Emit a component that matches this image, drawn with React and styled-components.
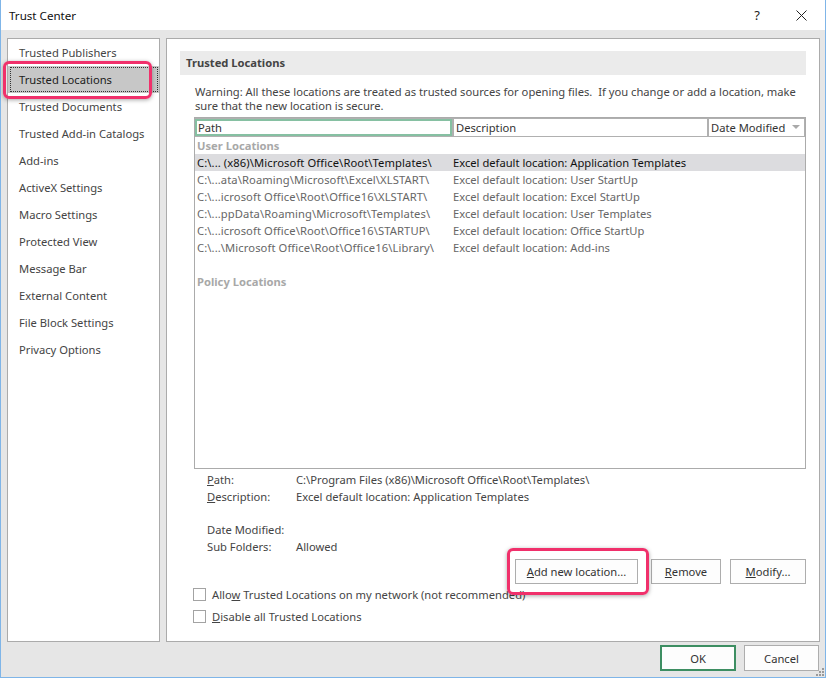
import React from "react";
import styled, { createGlobalStyle } from "styled-components";

const Global = createGlobalStyle`
  html, body { margin: 0; padding: 0; background: #ffffff; }
  body {
    font-family: "Noto Sans", "Segoe UI", sans-serif;
    font-size: 11.2px;
    color: #444444;
  }
  * { box-sizing: border-box; }
`;

const Window = styled.div`
  position: relative;
  width: 826px;
  height: 678px;
  display: flex;
  flex-direction: column;
  background: #e6e6e6;
  border-left: 1px solid #7fb5e8;
  border-right: 1px solid #7fb5e8;
  border-bottom: 1px solid #7fb5e8;
`;

const TitleBar = styled.div`
  height: 30px;
  flex: 0 0 30px;
  display: flex;
  align-items: center;
  background: #ffffff;
  padding-left: 8px;
`;

const Title = styled.div`
  flex: 1;
  color: #111;
  font-size: 11.6px;
`;

const TitleButton = styled.div`
  width: ${(p) => p.$w}px;
  height: 30px;
  display: flex;
  align-items: center;
  justify-content: center;
  color: #222;
  font-size: 13px;
`;

const Body = styled.div`
  flex: 1;
  display: flex;
  flex-direction: column;
  padding: 8px 5px 0 6px;
`;

const Main = styled.div`
  display: flex;
  gap: 6px;
  height: 604px;
`;

const Sidebar = styled.div`
  width: 153px;
  flex: 0 0 153px;
  background: #ffffff;
  border: 1px solid #ababab;
  display: flex;
  flex-direction: column;
`;

const NavItem = styled.div`
  position: relative;
  height: 27px;
  flex: 0 0 27px;
  display: flex;
  align-items: center;
  padding-left: 11px;
  color: ${(p) => (p.$selected ? "#202020" : "#444444")};
  background: ${(p) => (p.$selected ? "#c7c7c7" : "transparent")};
  white-space: nowrap;
  &::after {
    content: "";
    display: ${(p) => (p.$selected ? "block" : "none")};
    position: absolute;
    top: 1px;
    left: 2px;
    right: 1px;
    bottom: 1px;
    border: 1px dotted #333;
  }
`;

const Highlight = styled.span`
  position: absolute;
  left: ${(p) => p.$l}px;
  top: ${(p) => p.$t}px;
  width: ${(p) => p.$w}px;
  height: ${(p) => p.$h}px;
  border: 3px solid #f0306b;
  border-radius: 6px;
  box-shadow: 0 1px 4px rgba(0, 0, 0, 0.35);
  pointer-events: none;
  z-index: 3;
`;

const Content = styled.div`
  flex: 1;
  background: #ffffff;
  border: 1px solid #ababab;
  padding: 12px 13px 0 13px;
  display: flex;
  flex-direction: column;
`;

const SectionHeader = styled.div`
  height: 24px;
  display: flex;
  align-items: center;
  padding: 0 0 2px 6px;
  background: #ebebeb;
  font-weight: 700;
  color: #444444;
`;

const Section = styled.div`
  padding-left: 14px;
  display: flex;
  flex-direction: column;
`;

const Warning = styled.div`
  margin-top: 10px;
  padding-left: 1px;
  line-height: 14px;
  color: #444444;
  white-space: nowrap;
`;

const Table = styled.div`
  margin-top: 4px;
  height: 352px;
  border: 1px solid #ababab;
  background: #ffffff;
  display: flex;
  flex-direction: column;
`;

const HeaderRow = styled.div`
  height: 19px;
  flex: 0 0 19px;
  display: flex;
  gap: 2px;
  padding: 1px 1px 1px 0;
  background: #b0b0b0;
`;

const HeaderCell = styled.div`
  position: relative;
  width: ${(p) => (p.$w ? `${p.$w}px` : "auto")};
  flex: ${(p) => (p.$w ? `0 0 ${p.$w}px` : "1")};
  background: #ffffff;
  display: flex;
  align-items: center;
  padding-left: ${(p) => (p.$focus ? 1 : 2)}px;
  color: #333333;
  white-space: nowrap;
  border: ${(p) => (p.$focus ? "2px solid #86c0a2" : "none")};
`;

const SortArrow = styled.span`
  position: absolute;
  right: 4px;
  top: 6px;
  width: 0;
  height: 0;
  border-left: 4px solid transparent;
  border-right: 4px solid transparent;
  border-top: 4px solid #a9a9a9;
`;

const Row = styled.div`
  height: 17px;
  flex: 0 0 17px;
  display: flex;
  align-items: center;
  padding-left: 2px;
  white-space: nowrap;
  background: ${(p) => (p.$selected ? "#dcdcdf" : "transparent")};
  color: ${(p) => (p.$selected ? "#111111" : "#666666")};
`;

const GroupRow = styled(Row)`
  font-weight: 700;
  color: #a8a8a8;
`;

const PathCol = styled.div`
  width: 256px;
  flex: 0 0 256px;
  overflow: hidden;
  letter-spacing: 0.1px;
`;

const DescCol = styled.div`
  flex: 1;
`;

const Details = styled.div`
  margin-top: 2px;
  padding-left: 13px;
  display: grid;
  grid-template-columns: 89px 1fr;
  grid-template-rows: 17px 17px 16px 17px 17px;
  align-items: center;
  color: #444444;
  white-space: nowrap;
`;

const ButtonRow = styled.div`
  margin-top: 4px;
  display: flex;
  justify-content: flex-end;
  gap: 9px;
`;

const Button = styled.div`
  width: ${(p) => p.$w}px;
  height: ${(p) => p.$h || 25}px;
  margin-right: ${(p) => p.$mr || 0}px;
  position: relative;
  display: flex;
  align-items: center;
  justify-content: center;
  background: #fdfdfd;
  border: ${(p) => (p.$default ? "2px solid #3d8e62" : "1px solid #adadad")};
  color: #333333;
  white-space: nowrap;
`;

const Options = styled.div`
  margin-top: 2px;
  margin-left: -1px;
  display: flex;
  flex-direction: column;
  gap: 6px;
`;

const OptionRow = styled.label`
  height: 16px;
  display: flex;
  align-items: center;
  gap: 6px;
  color: #444444;
  white-space: nowrap;
`;

const Box = styled.span`
  width: 13px;
  height: 13px;
  border: 1px solid #a3a3a3;
  background: #ffffff;
`;

const Footer = styled.div`
  margin-top: 3px;
  display: flex;
  justify-content: flex-end;
  gap: 8px;
  padding-right: 1px;
`;

const Grip = styled.svg`
  position: absolute;
  right: 1px;
  bottom: 1px;
`;

const navItems = [
  "Trusted Publishers",
  "Trusted Locations",
  "Trusted Documents",
  "Trusted Add-in Catalogs",
  "Add-ins",
  "ActiveX Settings",
  "Macro Settings",
  "Protected View",
  "Message Bar",
  "External Content",
  "File Block Settings",
  "Privacy Options",
];

const locations = [
  ["C:\\... (x86)\\Microsoft Office\\Root\\Templates\\", "Excel default location: Application Templates"],
  ["C:\\...ata\\Roaming\\Microsoft\\Excel\\XLSTART\\", "Excel default location: User StartUp"],
  ["C:\\...icrosoft Office\\Root\\Office16\\XLSTART\\", "Excel default location: Excel StartUp"],
  ["C:\\...ppData\\Roaming\\Microsoft\\Templates\\", "Excel default location: User Templates"],
  ["C:\\...icrosoft Office\\Root\\Office16\\STARTUP\\", "Excel default location: Office StartUp"],
  ["C:\\...\\Microsoft Office\\Root\\Office16\\Library\\", "Excel default location: Add-ins"],
];

export default function App() {
  return (
    <>
      <Global />
      <Window>
        <TitleBar>
          <Title>Trust Center</Title>
          <TitleButton $w={40}>?</TitleButton>
          <TitleButton $w={48}>
            <svg width="11" height="11" viewBox="0 0 11 11">
              <path d="M0.5 0.5 L10.5 10.5 M10.5 0.5 L0.5 10.5" stroke="#222" strokeWidth="1" fill="none" />
            </svg>
          </TitleButton>
        </TitleBar>
        <Body>
          <Main>
            <Sidebar>
              {navItems.map((n) => (
                <NavItem key={n} $selected={n === "Trusted Locations"}>
                  {n}
                  {n === "Trusted Locations" && <Highlight $l={-5} $t={-5} $w={149} $h={38} />}
                </NavItem>
              ))}
            </Sidebar>
            <Content>
              <SectionHeader>Trusted Locations</SectionHeader>
              <Section>
                <Warning>
                  Warning: All these locations are treated as trusted sources for opening files.&nbsp; If you change or add a location, make
                  <br />
                  sure that the new location is secure.
                </Warning>
                <Table>
                  <HeaderRow>
                    <HeaderCell $w={257} $focus>Path</HeaderCell>
                    <HeaderCell $w={253}>Description</HeaderCell>
                    <HeaderCell>
                      Date Modified
                      <SortArrow />
                    </HeaderCell>
                  </HeaderRow>
                  <GroupRow>User Locations</GroupRow>
                  {locations.map(([p, d], i) => (
                    <Row key={p} $selected={i === 0}>
                      <PathCol>{p}</PathCol>
                      <DescCol>{d}</DescCol>
                    </Row>
                  ))}
                  <Row />
                  <GroupRow>Policy Locations</GroupRow>
                </Table>
                <Details>
                  <span><u>P</u>ath:</span>
                  <span>C:\Program Files (x86)\Microsoft Office\Root\Templates\</span>
                  <span><u>D</u>escription:</span>
                  <span>Excel default location: Application Templates</span>
                  <span />
                  <span />
                  <span>Date Modified:</span>
                  <span />
                  <span>Sub Folders:</span>
                  <span>Allowed</span>
                </Details>
                <ButtonRow>
                  <Button $w={123} $mr={4}>
                    <span><u>A</u>dd new location...</span>
                    <Highlight $l={-9} $t={-12} $w={142} $h={47} />
                  </Button>
                  <Button $w={70}><span><u>R</u>emove</span></Button>
                  <Button $w={76}><span><u>M</u>odify...</span></Button>
                </ButtonRow>
                <Options>
                  <OptionRow>
                    <Box />
                    <span>Allo<u>w</u> Trusted Locations on my network (not recommended)</span>
                  </OptionRow>
                  <OptionRow>
                    <Box />
                    <span><u>D</u>isable all Trusted Locations</span>
                  </OptionRow>
                </Options>
              </Section>
            </Content>
          </Main>
          <Footer>
            <Button $w={76} $h={26} $default>OK</Button>
            <Button $w={75} $h={26}>Cancel</Button>
          </Footer>
        </Body>
        <Grip width="8" height="8" viewBox="0 0 8 8">
          <g fill="#9a9a9a">
            <rect x="6" y="0" width="2" height="2" />
            <rect x="3" y="3" width="2" height="2" />
            <rect x="6" y="3" width="2" height="2" />
            <rect x="0" y="6" width="2" height="2" />
            <rect x="3" y="6" width="2" height="2" />
            <rect x="6" y="6" width="2" height="2" />
          </g>
        </Grip>
      </Window>
    </>
  );
}
